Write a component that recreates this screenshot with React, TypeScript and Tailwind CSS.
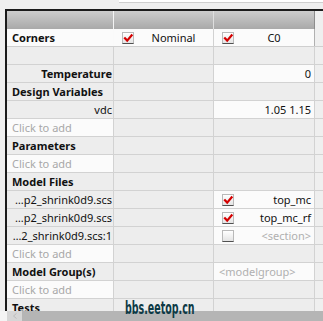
import React from 'react';

type Row = {
  label: string;
  kind: 'blank' | 'section' | 'right' | 'boldRight' | 'add';
  value?: string;
  check?: boolean;
  muted?: boolean;
  left?: boolean;
};

const rows: Row[] = [
  { label: '', kind: 'blank' },
  { label: 'Temperature', kind: 'boldRight', value: '0' },
  { label: 'Design Variables', kind: 'section' },
  { label: 'vdc', kind: 'right', value: '1.05 1.15' },
  { label: 'Click to add', kind: 'add' },
  { label: 'Parameters', kind: 'section' },
  { label: 'Click to add', kind: 'add' },
  { label: 'Model Files', kind: 'section' },
  { label: '…p2_shrink0d9.scs', kind: 'right', check: true, value: 'top_mc' },
  { label: '…p2_shrink0d9.scs', kind: 'right', check: true, value: 'top_mc_rf' },
  { label: '…2_shrink0d9.scs:1', kind: 'right', check: false, value: '<section>', muted: true },
  { label: 'Click to add', kind: 'add' },
  { label: 'Model Group(s)', kind: 'section', value: '<modelgroup>', muted: true, left: true },
  { label: 'Click to add', kind: 'add' },
  { label: 'Tests', kind: 'section' },
];

function CheckBox({ on }: { on: boolean }) {
  return (
    <div className="relative h-[12px] w-[12px] shrink-0 border border-[#b9b9b9] border-b-[#505050] bg-gradient-to-b from-white to-[#e4e4e4]">
      {on && (
        <svg viewBox="0 0 12 12" className="absolute left-[-1px] top-[-1px] h-[12px] w-[12px]">
          <path d="M3 6.2 L5.2 8.6 L9.6 3.4" fill="none" stroke="#d40000" strokeWidth="2.2" strokeLinecap="square" />
        </svg>
      )}
    </div>
  );
}

function DataRow({ r }: { r: Row }) {
  const c1 =
    r.kind === 'add'
      ? 'bg-[#fbfbfb] text-[#a8a8a8] pl-[5px]'
      : r.kind === 'section'
      ? 'bg-[#ededed] font-bold text-[#111] pl-[5px]'
      : r.kind === 'boldRight'
      ? 'bg-[#ededed] font-bold text-[#111] justify-end pr-[1px]'
      : r.kind === 'right'
      ? 'bg-[#ededed] text-[#111] justify-end pr-[1px]'
      : 'bg-[#ededed]';
  const hasC3 = r.value !== undefined;
  return (
    <div className="flex h-[18px] border-b border-[#d2d2d2]">
      <div className={`flex w-[107px] items-center overflow-hidden whitespace-nowrap border-r border-[#d2d2d2] ${c1}`}>
        {r.label}
      </div>
      <div className="w-[100px] border-r border-[#d2d2d2] bg-[#ededed]" />
      <div
        className={`flex w-[101px] items-center border-r border-[#d2d2d2] ${
          hasC3 ? 'bg-[#fbfbfb]' : 'bg-[#ededed]'
        } ${r.left ? 'pl-[5px]' : 'pl-[8px] pr-[3px]'}`}
      >
        {r.check !== undefined && <CheckBox on={r.check} />}
        {hasC3 && (
          <span className={`${r.left ? '' : 'ml-auto'} ${r.muted ? 'text-[#b0b0b0]' : 'text-[#111]'}`}>
            {r.value}
          </span>
        )}
      </div>
      <div className="flex-1 bg-[#efefef]" />
    </div>
  );
}

export default function App() {
  return (
    <div className="relative h-[321px] w-[323px] overflow-hidden bg-[#efefef] font-['Noto_Sans',sans-serif] text-[11px] leading-none">
      {/* top toolbar edge */}
      <div className="flex h-[9px]">
        <div className="w-[119px]" />
        <div className="h-[3px] flex-1 border-b border-[#cfcfcf] bg-white" />
      </div>

      {/* table frame */}
      <div className="ml-[5px] h-[302px] overflow-hidden border-l-2 border-t-2 border-[#1b1b1b]">
        {/* header */}
        <div className="flex h-[18px]">
          <div className="w-[107px] border-r border-[#f4f4f4] bg-gradient-to-b from-[#cdcdcd] to-[#a9a9a9]" />
          <div className="w-[100px] border-r border-[#dedede] bg-gradient-to-b from-[#cdcdcd] to-[#a9a9a9]" />
          <div className="w-[101px] border-r border-[#8c8c8c] bg-gradient-to-b from-[#cdcdcd] to-[#a9a9a9]" />
          <div className="flex-1 bg-[#efefef]" />
        </div>

        {/* corners */}
        <div className="flex h-[18px] border-b border-[#cfcfcf]">
          <div className="flex w-[107px] items-center border-r border-[#fafafa] bg-[#fbfbfb] pl-[5px] font-bold text-[#111]">
            Corners
          </div>
          <div className="flex w-[100px] items-center border-r border-[#d2d2d2] bg-[#fbfbfb] pl-[8px]">
            <CheckBox on />
            <span className="flex-1 text-center text-[#111]">Nominal</span>
          </div>
          <div className="flex w-[101px] items-center border-r border-[#b0b0b0] bg-[#fbfbfb] pl-[8px]">
            <CheckBox on />
            <span className="flex-1 text-center text-[#111]">C0</span>
          </div>
          <div className="flex-1 bg-[#efefef]" />
        </div>

        {rows.map((r, i) => (
          <DataRow key={i} r={r} />
        ))}
      </div>

      {/* horizontal scrollbar */}
      <div className="flex h-[10px]">
        <div className="w-[7px] bg-[#f4f4f4]" />
        <div className="flex w-[15px] items-center justify-center bg-[#d6d6d6]">
          <svg viewBox="0 0 8 8" className="h-[8px] w-[8px]">
            <path d="M5.5 1.5 L2.5 4 L5.5 6.5" fill="none" stroke="#bdbdbd" strokeWidth="1" />
          </svg>
        </div>
        <div className="flex-1 bg-[#b5b5b5]" />
      </div>

      {/* watermark */}
      <div className="absolute left-[125px] top-[300px] origin-left scale-x-[0.62] whitespace-nowrap font-['DejaVu_Sans_Condensed','DejaVu_Sans',sans-serif] text-[17px] font-bold text-[#0d3a46]">
        bbs.eetop.cn
      </div>
    </div>
  );
}
